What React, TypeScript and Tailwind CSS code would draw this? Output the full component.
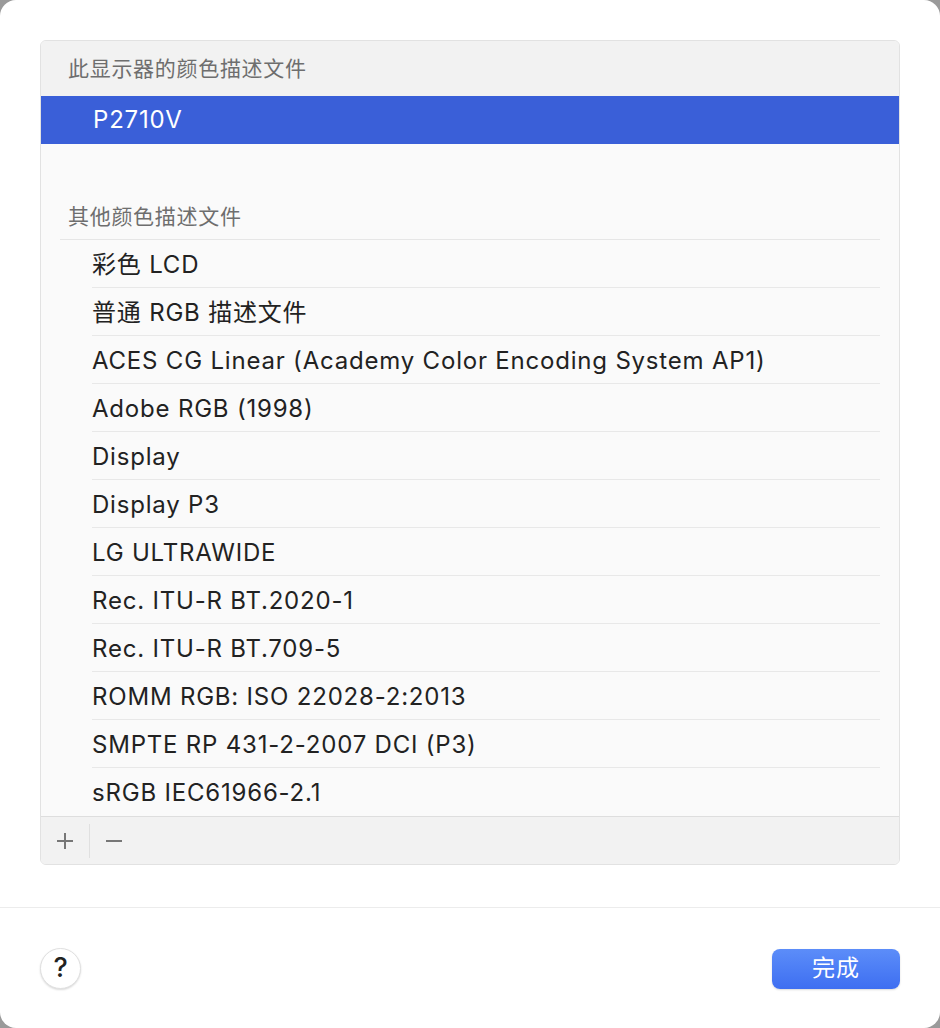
const others = [
  '彩色 LCD',
  '普通 RGB 描述文件',
  'ACES CG Linear (Academy Color Encoding System AP1)',
  'Adobe RGB (1998)',
  'Display',
  'Display P3',
  'LG ULTRAWIDE',
  'Rec. ITU-R BT.2020-1',
  'Rec. ITU-R BT.709-5',
  'ROMM RGB: ISO 22028-2:2013',
  'SMPTE RP 431-2-2007 DCI (P3)',
  'sRGB IEC61966-2.1',
];

const font = { fontFamily: 'Inter, "Noto Sans CJK SC", sans-serif' };

export default function App() {
  return (
    <div className="w-[940px] h-[1028px] bg-[#9a9a9a]" style={font}>
      <div className="w-full h-full bg-white rounded-[16px] flex flex-col">
        <div className="px-10 pt-10">
          <div className="rounded-[6px] border border-[#e2e2e2] bg-[#fafafa] overflow-hidden">
            {/* current display profile */}
            <div className="h-[55px] bg-[#f2f2f2] flex items-center pl-[27px] text-[21px] tracking-[0.7px] text-[#6e6e6e]">
              此显示器的颜色描述文件
            </div>
            <div className="h-[48px] bg-[#3a5fd8] flex items-center pl-[52px] text-[24px] tracking-[0.8px] text-white">
              P2710V
            </div>
            <div className="h-[48px]" />

            {/* other profiles */}
            <div className="mx-[19px] h-[48px] border-b border-[#e6e6e6] flex items-center pl-[8px] pt-[2px] text-[21px] tracking-[0.7px] text-[#6e6e6e]">
              其他颜色描述文件
            </div>
            <div className="pl-[51px] pr-[19px]">
              {others.map((name, i) => (
                <div
                  key={name}
                  className={
                    'h-[48px] flex items-center pt-[2px] text-[24px] tracking-[0.8px] text-[#222] ' +
                    (i < others.length - 1 ? 'border-b border-[#e8e8e8]' : '')
                  }
                >
                  {name}
                </div>
              ))}
            </div>

            {/* toolbar */}
            <div className="h-[48px] bg-[#f2f2f2] border-t border-[#dedede] flex items-center">
              <div className="w-[48px] h-full flex items-center justify-center">
                <svg width="18" height="18" viewBox="0 0 18 18">
                  <path d="M9 1v16M1 9h16" stroke="#777" strokeWidth="2" />
                </svg>
              </div>
              <div className="w-px h-[34px] bg-[#e0e0e0]" />
              <div className="w-[48px] h-full flex items-center justify-center">
                <svg width="18" height="18" viewBox="0 0 18 18">
                  <path d="M1 9h16" stroke="#777" strokeWidth="2" />
                </svg>
              </div>
            </div>
          </div>
        </div>

        <div className="mt-[42px] border-t border-[#ececec]" />

        <div className="flex items-center justify-between px-10 pt-[40px]">
          <button className="w-[41px] h-[41px] rounded-full bg-white border border-[#e0e0e0] shadow-[0_1px_2px_rgba(0,0,0,0.15)] flex items-center justify-center text-[27px] font-medium text-[#222]">
            ?
          </button>
          <button className="w-[128px] h-[40px] rounded-[8px] bg-gradient-to-b from-[#5c8df9] to-[#3e6ef1] text-white text-[23px] tracking-[1px] shadow-[0_1px_2px_rgba(0,0,0,0.15)]">
            完成
          </button>
        </div>
      </div>
    </div>
  );
}
